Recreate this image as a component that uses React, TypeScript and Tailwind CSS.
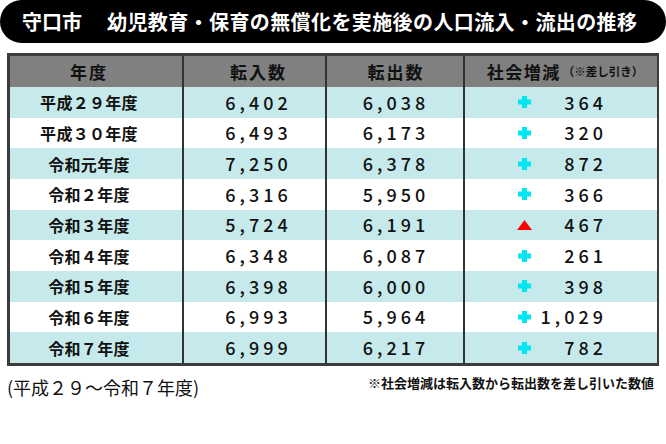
const rows = [
  { year: "平成２９年度", inflow: "6,402", outflow: "6,038", diff: "364", up: true },
  { year: "平成３０年度", inflow: "6,493", outflow: "6,173", diff: "320", up: true },
  { year: "令和元年度", inflow: "7,250", outflow: "6,378", diff: "872", up: true },
  { year: "令和２年度", inflow: "6,316", outflow: "5,950", diff: "366", up: true },
  { year: "令和３年度", inflow: "5,724", outflow: "6,191", diff: "467", up: false },
  { year: "令和４年度", inflow: "6,348", outflow: "6,087", diff: "261", up: true },
  { year: "令和５年度", inflow: "6,398", outflow: "6,000", diff: "398", up: true },
  { year: "令和６年度", inflow: "6,993", outflow: "5,964", diff: "1,029", up: true },
  { year: "令和７年度", inflow: "6,999", outflow: "6,217", diff: "782", up: true },
];

function Plus() {
  return (
    <svg width="13" height="12" viewBox="0 0 13 12">
      <rect x="4" y="0" width="5" height="12" fill="#00e6f2" />
      <rect x="0" y="3.5" width="13" height="5" fill="#00e6f2" />
    </svg>
  );
}

function Minus() {
  return (
    <svg width="15" height="10" viewBox="0 0 15 10">
      <polygon points="7.5,0 15,10 0,10" fill="#ff0000" />
    </svg>
  );
}

export default function App() {
  return (
    <div
      className="w-[666px] h-[444px] bg-white text-[#111]"
      style={{ fontFamily: '"Noto Sans CJK JP", "Noto Sans", sans-serif' }}
    >
      {/* title bar */}
      <div className="h-[43px] rounded-full bg-black flex items-center pl-[22px] text-white text-[20px] font-bold leading-none">
        <span>守口市</span>
        <span className="ml-[25px] tracking-[0.4px]">幼児教育・保育の無償化を実施後の人口流入・流出の推移</span>
      </div>

      {/* table */}
      <div className="mx-[7px] mt-[10px] border-[3px] border-[#3c3c3c]">
        <div className="grid grid-cols-[174px_143px_138px_192px] grid-rows-[31px_repeat(9,1fr)] h-[307px]">
          <div className="bg-[#808080] border-r-2 border-[#333] flex items-center justify-center pr-[14px] text-[17px] font-bold tracking-[2px]">
            年度
          </div>
          <div className="bg-[#808080] border-r-2 border-[#333] flex items-center justify-center pl-[8px] text-[17px] font-bold tracking-[2px]">
            転入数
          </div>
          <div className="bg-[#808080] border-r-2 border-[#333] flex items-center justify-center pl-[2px] text-[17px] font-bold tracking-[2px]">
            転出数
          </div>
          <div className="bg-[#808080] flex items-center justify-center pl-[8px]">
            <span className="text-[17px] font-bold tracking-[1.5px]">社会増減</span>
            <span className="text-[11.5px] font-bold ml-[2px]">（※差し引き）</span>
          </div>

          {rows.map((r, i) => {
            const bg = i % 2 === 0 ? "bg-[#c6eaec]" : "bg-white";
            return (
              <div key={r.year} className="contents">
                <div className={`${bg} border-r-2 border-[#333] flex items-center justify-center pr-[14px] text-[16px] font-bold tracking-[0.3px]`}>
                  {r.year}
                </div>
                <div className={`${bg} border-r-2 border-[#333] flex items-center justify-center pl-[8px] text-[18px] font-medium tracking-[4px]`}>
                  {r.inflow}
                </div>
                <div className={`${bg} border-r-2 border-[#333] flex items-center justify-center pl-[2px] text-[18px] font-medium tracking-[4px]`}>
                  {r.outflow}
                </div>
                <div className={`${bg} flex items-center justify-between pl-[52px] pr-[50px]`}>
                  <span className="w-[15px] flex items-center justify-center">{r.up ? <Plus /> : <Minus />}</span>
                  <span className="text-[18px] font-medium tracking-[4px]">{r.diff}</span>
                </div>
              </div>
            );
          })}
        </div>
      </div>

      {/* footer */}
      <div className="mx-[7px] mt-[9px] flex items-start justify-between">
        <span className="text-[18px] leading-[25px]">(平成２９～令和７年度)</span>
        <span className="mr-[5px] text-[13px] leading-[16px] font-bold">※社会増減は転入数から転出数を差し引いた数値</span>
      </div>
    </div>
  );
}
